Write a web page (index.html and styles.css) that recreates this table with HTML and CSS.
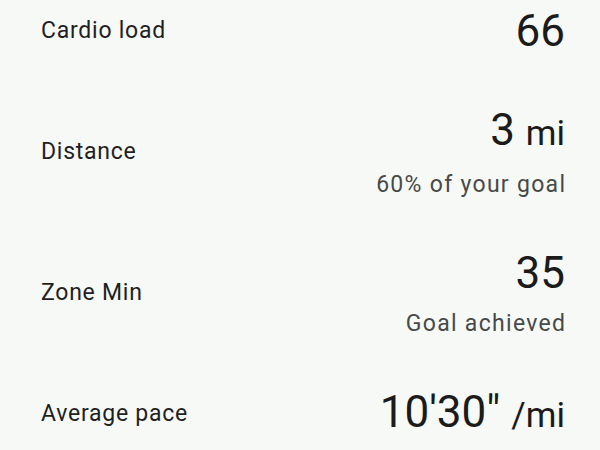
FILE: index.html
```html
<!DOCTYPE html>
<html lang="en">
<head>
<meta charset="utf-8">
<link rel="stylesheet" href="styles.css">
</head>
<body>
<main class="stats">
  <div class="row">
    <div class="label">Cardio load</div>
    <div class="val"><div class="num">66</div></div>
  </div>
  <div class="row">
    <div class="label">Distance</div>
    <div class="val"><div class="num">3 <span class="unit">mi</span></div><div class="sub">60% of your goal</div></div>
  </div>
  <div class="row">
    <div class="label">Zone Min</div>
    <div class="val"><div class="num">35</div><div class="sub">Goal achieved</div></div>
  </div>
  <div class="row">
    <div class="label">Average pace</div>
    <div class="val"><div class="num">10'30" <span class="unit">/mi</span></div></div>
  </div>
</main>
</body>
</html>
```
FILE: styles.css
```css
html, body {
  margin: 0;
  padding: 0;
  background: #f7f9f6;
  height: 100%;
  overflow: hidden;
}
body {
  font-family: Roboto, "Noto Sans", sans-serif;
  color: #1f1f1f;
}
.stats {
  display: flex;
  flex-direction: column;
  gap: 47px;
  padding: 5px 35px 0 41px;
}
.row {
  display: flex;
  justify-content: space-between;
  align-items: center;
}
.label {
  font-size: 23px;
  line-height: 28px;
  letter-spacing: 0.75px;
  color: #1f1f1f;
}
.val {
  display: flex;
  flex-direction: column;
  align-items: flex-end;
}
.num {
  font-size: 44px;
  line-height: 52px;
  color: #1b1b1b;
}
.unit {
  font-size: 35px;
}
.sub {
  margin: 11px -1.3px 2px 0;
  font-size: 23px;
  line-height: 27px;
  letter-spacing: 1.3px;
  color: #474a48;
}
```
